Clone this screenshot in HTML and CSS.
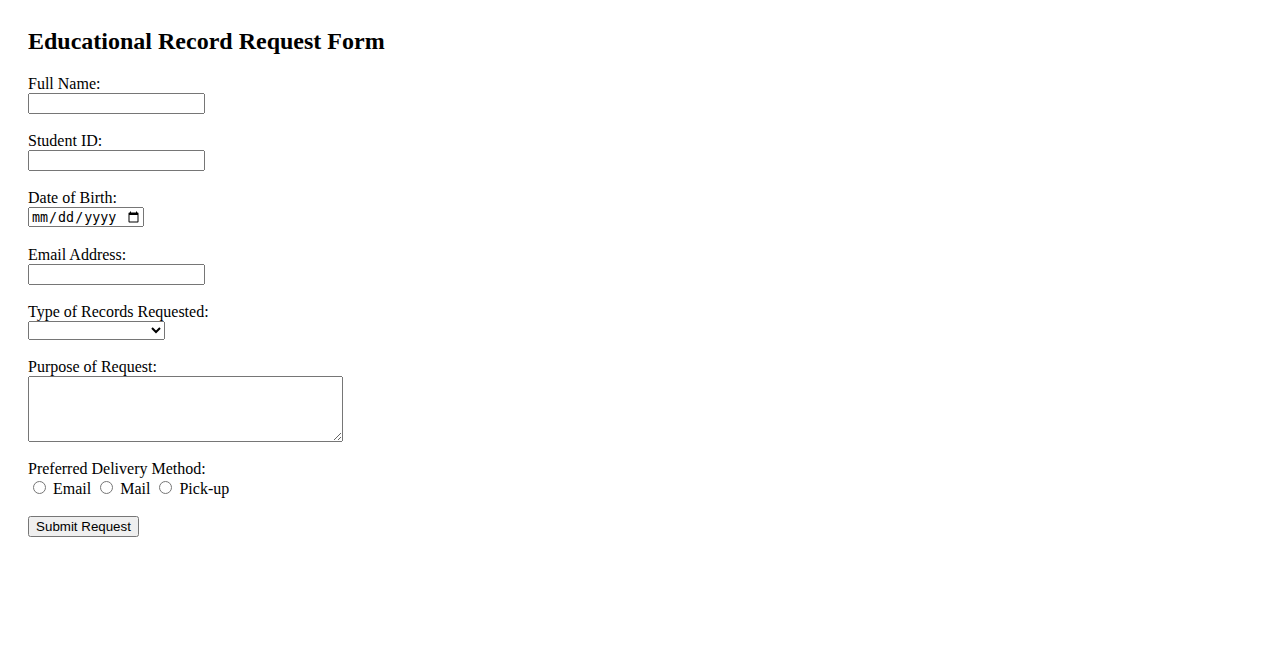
FILE: index.html
```html
<!DOCTYPE html>
<html lang="en">
<head>
<meta charset="utf-8">
<title>Educational Record Request Form</title>
<link rel="stylesheet" href="styles.css">
</head>
<body>
<h2 class="title">Educational Record Request Form</h2>
<form class="form">
  <div class="group">
    <label class="label" for="name">Full Name:</label>
    <input class="text-input" type="text" id="name">
  </div>
  <div class="group">
    <label class="label" for="sid">Student ID:</label>
    <input class="text-input" type="text" id="sid">
  </div>
  <div class="group">
    <label class="label" for="dob">Date of Birth:</label>
    <input class="date-input" type="date" id="dob">
  </div>
  <div class="group">
    <label class="label" for="email">Email Address:</label>
    <input class="text-input" type="email" id="email">
  </div>
  <div class="group">
    <label class="label" for="type">Type of Records Requested:</label>
    <select class="select-input" id="type"><option></option></select>
  </div>
  <div class="group">
    <label class="label" for="purpose">Purpose of Request:</label>
    <textarea class="area-input" id="purpose"></textarea>
  </div>
  <div class="group">
    <span class="label">Preferred Delivery Method:</span>
    <div class="radios"><input type="radio" name="d" id="r1"> <label for="r1">Email</label> <input type="radio" name="d" id="r2"> <label for="r2">Mail</label> <input type="radio" name="d" id="r3"> <label for="r3">Pick-up</label></div>
  </div>
  <button class="submit" type="submit">Submit Request</button>
</form>
</body>
</html>
```
FILE: styles.css
```css
html, body {
  background: #fff;
}
body {
  margin: 0;
  padding: 28px;
  font-family: "Liberation Serif", "Times New Roman", serif;
  font-size: 16px;
  color: #000;
}
.title {
  margin: 0 0 19.92px;
  font-size: 24px;
  font-weight: bold;
}
.group {
  padding-bottom: 17.6px;
}
.label {
  display: block;
  line-height: 18.4px;
}
.text-input {
  display: block;
  box-sizing: border-box;
  width: 177px;
  height: 21px;
  margin: 0;
}
.date-input {
  display: block;
  box-sizing: border-box;
  width: 116px;
  height: 20px;
  margin: 0 0 1px;
}
.select-input {
  display: block;
  box-sizing: border-box;
  width: 137px;
  height: 19px;
  margin: 0;
}
.area-input {
  display: block;
  box-sizing: border-box;
  width: 315px;
  height: 66px;
  margin: 0;
}
.radios {
  line-height: 18.4px;
}
.submit {
  display: block;
  margin: 0;
  box-sizing: border-box;
  width: 111px;
  height: 21px;
  font-family: "Liberation Sans", Arial, sans-serif;
  font-size: 13.33px;
  padding: 1px 6px;
}
```
